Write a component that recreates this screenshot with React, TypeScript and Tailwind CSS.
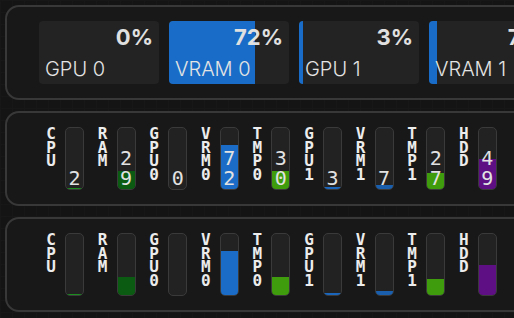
import React from 'react';

const cards = [
  { label: 'GPU 0', value: 0 },
  { label: 'VRAM 0', value: 72 },
  { label: 'GPU 1', value: 3 },
  { label: 'VRAM 1', value: 7 },
];

const meters = [
  { label: 'CPU', value: 2, color: '#1b8e1f' },
  { label: 'RAM', value: 29, color: '#0b5c12' },
  { label: 'GPU0', value: 0, color: '#1a6cc6' },
  { label: 'VRM0', value: 72, color: '#1a6cc6' },
  { label: 'TMP0', value: 30, color: '#3f9c0c' },
  { label: 'GPU1', value: 3, color: '#1a66bd' },
  { label: 'VRM1', value: 7, color: '#1a5fae' },
  { label: 'TMP1', value: 27, color: '#3f9c0c' },
  { label: 'HDD', value: 49, color: '#5d0f83' },
];

const Panel: React.FC<{ children: React.ReactNode; pl: string }> = ({ children, pl }) => (
  <div className={`w-[600px] h-[95px] shrink-0 rounded-[14px] border-2 border-[#383838] bg-[#181818] py-[14px] ${pl}`}>
    {children}
  </div>
);

const Meters: React.FC<{ showValues: boolean }> = ({ showValues }) => (
  <div className="flex gap-[11.6px] font-['DejaVu_Sans_Mono',monospace]">
    {meters.map(m => (
      <div key={m.label} className="flex gap-[7px]">
        <div className="w-[14px] shrink-0 flex flex-col items-center">
          {m.label.split('').map((ch, i) => (
            <span key={i} className="block text-[16px] leading-[13.5px] font-bold text-[#ececec]">{ch}</span>
          ))}
        </div>
        <div className="relative w-[19px] h-[63px] shrink-0 rounded-[5px] border border-[#3a3a3a] bg-[#222222] overflow-hidden">
          <div className="absolute left-0 right-0 bottom-0" style={{ height: `${m.value}%`, backgroundColor: m.color }} />
          {showValues && (
            <div className="relative h-full flex flex-col items-center justify-end pb-[1px]">
              {String(m.value).split('').map((d, i) => (
                <span key={i} className="block text-[20px] leading-[20px] text-[#e2e2e2]">{d}</span>
              ))}
            </div>
          )}
        </div>
      </div>
    ))}
  </div>
);

const App: React.FC = () => {
  return (
    <div className="w-[514px] h-[318px] overflow-hidden bg-[#141414] bg-[linear-gradient(to_right,#171717_1px,transparent_1px),linear-gradient(to_bottom,#171717_1px,transparent_1px)] bg-[size:12px_12px] pl-[5px] pt-[5px] flex flex-col gap-[11px] font-['Inter','Liberation_Sans',sans-serif]">
      <Panel pl="pl-[32px]">
        <div className="flex gap-[10px]">
          {cards.map(c => (
            <div key={c.label} className="relative w-[120px] h-[63px] shrink-0 rounded-[4px] bg-[#232323] overflow-hidden">
              <div className="absolute left-0 top-0 bottom-0 bg-[#196dc8]" style={{ width: `${c.value}%` }} />
              <div className="relative flex flex-col px-[6px] pt-[5px]">
                <div className="text-right text-[22px] leading-[22px] font-bold text-[#e0e0e0]">{c.value}%</div>
                <div className="mt-[11px] text-[20px] leading-[20px] font-light text-[#e4e4e4]">{c.label}</div>
              </div>
            </div>
          ))}
        </div>
      </Panel>
      <Panel pl="pl-[37px]">
        <Meters showValues />
      </Panel>
      <Panel pl="pl-[37px]">
        <Meters showValues={false} />
      </Panel>
    </div>
  );
};

export default App;
